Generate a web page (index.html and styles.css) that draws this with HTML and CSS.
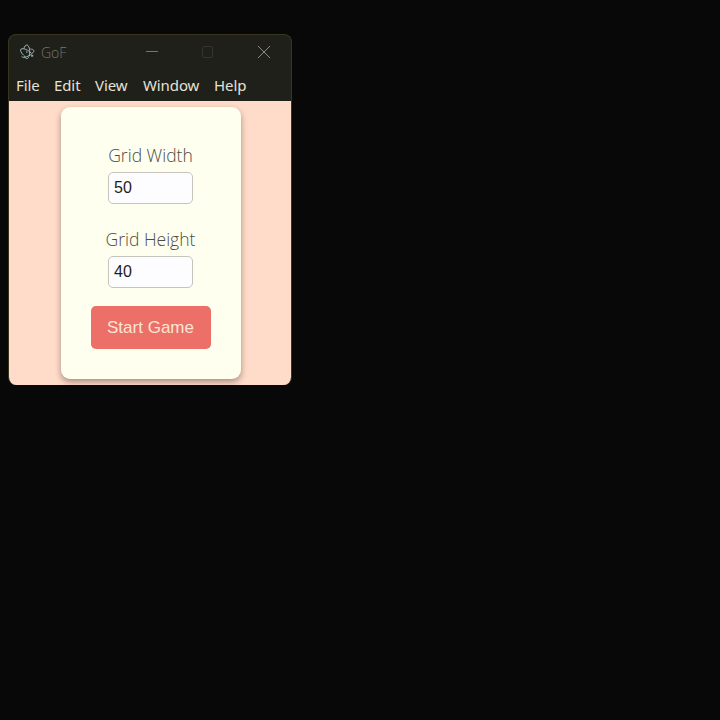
FILE: index.html
```
<!DOCTYPE html>
<html lang="en">
<head>
<meta charset="utf-8">
<title>GoF</title>
<link rel="stylesheet" href="styles.css">
</head>
<body>
<div class="window">
  <header class="titlebar">
    <svg class="logo" width="16" height="16" viewBox="0 0 16 16" fill="none" stroke="#9db7bd" stroke-width="1" stroke-linecap="round">
      <path d="M4.2 10.8C1.8 8.5 1 6.200 1.900 5.200c1-1 4-.5 6.900 1.200 1.400.8 2.600 1.800 3.500 2.700"/>
      <path d="M4.900 4.300C5.500 2.300 6.600 1 7.800 1c1.600 0 2.900 3 2.900 6.800 0 1.600-.2 3-.6 4.200"/>
      <path d="M11.800 5.100c1.500.1 2.500.5 2.900 1.200.7 1.300-1.400 3.600-4.700 5.400-3.300 1.800-6.400 2.300-7.200 1"/>
      <path d="M5.300 11.900c.6 1.700 1.500 2.700 2.500 2.700.7 0 1.300-.4 1.800-1.200"/>
      <circle cx="7.800" cy="8" r="0.8" fill="#8cc3d2" stroke="none"/>
      <circle cx="13" cy="11.800" r="0.700"/>
    </svg>
    <span class="name">GoF</span>
    <div class="controls">
      <svg width="14" height="14" viewBox="0 0 14 14" stroke="#77776b"><path d="M1 6.500h12"/></svg>
      <svg width="14" height="14" viewBox="0 0 14 14" fill="none" stroke="#35352c"><rect x="1.500" y="1.500" width="10" height="11" rx="1.500"/></svg>
      <svg width="14" height="14" viewBox="0 0 14 14" stroke="#8c8c7e"><path d="M1 1l12 12M13 1L1 13"/></svg>
    </div>
  </header>
  <nav class="menu">
    <span>File</span><span>Edit</span><span>View</span><span>Window</span><span>Help</span>
  </nav>
  <main class="content">
    <form class="card">
      <label class="label" for="w">Grid Width</label>
      <input class="field" id="w" type="text" value="50">
      <label class="label second" for="h">Grid Height</label>
      <input class="field" id="h" type="text" value="40">
      <button class="start" type="button">Start Game</button>
    </form>
  </main>
</div>
</body>
</html>
```
FILE: styles.css
```
* { box-sizing: border-box; }
body {
  margin: 0;
  height: 720px;
  padding: 34px 0 0 8px;
  overflow: hidden;
  background: #080808;
  font-family: "Open Sans", "Noto Sans", sans-serif;
}
.window {
  width: 284px;
  height: 351px;
  border: 1px solid #393620;
  border-bottom: 0;
  border-radius: 8px;
  overflow: hidden;
  background: #20201b;
}
.titlebar {
  display: flex;
  align-items: center;
  height: 34px;
  padding-left: 10px;
}
.name {
  margin-left: 6px;
  font-size: 14px;
  font-weight: 300;
  color: #77776a;
}
.controls {
  display: flex;
  gap: 42px;
  margin-left: auto;
  padding-right: 20px;
}
.menu {
  display: grid;
  grid-template-columns: 38px 41px 48px 71px auto;
  align-items: center;
  height: 32px;
  padding: 0 0 1px 7px;
  font: 15px/30px "Noto Sans", "Open Sans", sans-serif;
  letter-spacing: -0.1px;
  color: #e4e3d5;
}
.menu span { justify-self: start; white-space: nowrap; }
.content {
  height: 284px;
  padding: 6px 51.5px 0;
  background: #ffdcc9;
}
.card {
  display: flex;
  flex-direction: column;
  align-items: center;
  width: 180px;
  height: 272px;
  padding-top: 35px;
  border-radius: 9px;
  background: #fffff0;
  box-shadow: 0 3px 6px rgba(70, 45, 40, 0.45);
}
.label {
  height: 30px;
  font-size: 17.5px;
  font-weight: 300;
  line-height: 27px;
  color: #4c4c46;
}
.second { margin-top: 22px; }
.field {
  width: 85px;
  height: 32px;
  padding: 0 5px 1px;
  border: 1px solid #c6c4bd;
  border-radius: 5px;
  background: #fdfdff;
  font: 16px "Liberation Sans", Arial, sans-serif;
  color: #1d1d1d;
}
.start {
  width: 120px;
  height: 43px;
  margin-top: 18px;
  padding: 0;
  border: 0;
  border-radius: 5px;
  background: #ec6f68;
  font: 17px "Liberation Sans", Arial, sans-serif;
  color: #fbe6d4;
}
```
